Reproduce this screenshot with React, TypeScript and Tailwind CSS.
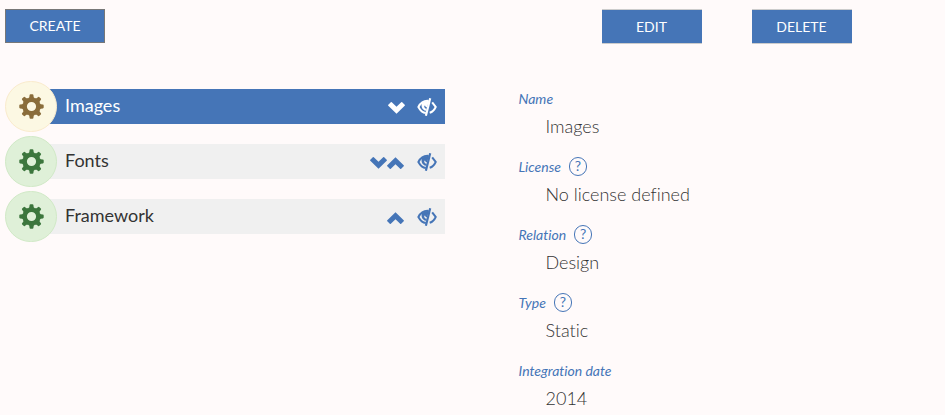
import React from "react";

type Item = { name: string; selected?: boolean; down?: boolean; up?: boolean };

const items: Item[] = [
  { name: "Images", selected: true, down: true },
  { name: "Fonts", down: true, up: true },
  { name: "Framework", up: true },
];

const details = [
  { label: "Name", value: "Images", help: false },
  { label: "License", value: "No license defined", help: true },
  { label: "Relation", value: "Design", help: true },
  { label: "Type", value: "Static", help: true },
  { label: "Integration date", value: "2014", help: false },
];

function Gear() {
  return (
    <svg viewBox="-12.5 -12.5 25 25" className="size-[25px]" fill="currentColor" aria-hidden="true">
      <path
        fillRule="evenodd"
        d="M0-9a9 9 0 1 0 0 18a9 9 0 1 0 0-18zM0-4.6a4.6 4.6 0 1 1 0 9.2a4.6 4.6 0 1 1 0-9.2z"
      />
      {[0, 45, 90, 135, 180, 225, 270, 315].map((angle) => (
        <path
          key={angle}
          transform={`rotate(${angle})`}
          d="M-3.6-8L-2.2-9.3L-1.9-11.4Q-1.8-12.2-1-12.2H1Q1.8-12.2 1.9-11.4L2.2-9.3L3.6-8z"
        />
      ))}
    </svg>
  );
}

function Chevron({ up }: { up?: boolean }) {
  return (
    <svg viewBox="0 0 17 14" className="h-[14px] w-[17px]" fill="currentColor" aria-hidden="true">
      <path
        d={
          up
            ? "M8.5 1.2L16.7 9.2Q17.2 9.7 16.7 10.2L14.2 12.7Q13.7 13.1 13.2 12.7L8.5 8.2L3.8 12.7Q3.3 13.1 2.8 12.7L0.3 10.2Q-0.2 9.7 0.3 9.2z"
            : "M8.5 12.8L16.7 4.8Q17.2 4.3 16.7 3.8L14.2 1.3Q13.7 0.9 13.2 1.3L8.5 5.8L3.8 1.3Q3.3 0.9 2.8 1.3L0.3 3.8Q-0.2 4.3 0.3 4.8z"
        }
      />
    </svg>
  );
}

function EyeOff() {
  return (
    <svg viewBox="0 0 20 18" className="h-[18px] w-5" fill="none" stroke="currentColor" aria-hidden="true">
      <path d="M11.5 2.9C7 2.5 3.6 4.8 1.4 9C3.2 12.4 5.5 14.7 8.8 15.1" strokeWidth="2" />
      <path
        d="M12 2.5L5.2 4.4C3.7 7.6 4.7 11.8 9.1 12.8L9.7 11C8 10.6 7.2 9.6 7.2 7.8L8.2 7.8Q8.4 9.3 10 9.3L11.4 5z"
        fill="currentColor"
        stroke="none"
      />
      <path d="M13.2 0.3L8.9 17.7" strokeWidth="2.2" />
      <path d="M15.2 4.4L18.7 9C17.4 11.8 15.3 14 12.7 14.8" strokeWidth="2" />
    </svg>
  );
}

export default function App() {
  return (
    <main className="grid min-h-screen grid-cols-2 bg-[#fffafa] font-['Lato',sans-serif] text-[#333] [font-variant-ligatures:none]">
      <section className="pt-[9px] pr-7 pl-[5px]">
        <button type="button" className="block h-[34px] w-[100px] border border-[#777] bg-[#4575b7] text-sm text-white">
          CREATE
        </button>
        <ul className="mt-[38px] flex flex-col gap-1">
          {items.map((item) => (
            <li key={item.name} className="flex items-center">
              <span
                className={`z-10 flex h-[51px] w-[52px] shrink-0 items-center justify-center rounded-full border ${
                  item.selected
                    ? "border-[#faebcc] bg-[#fcf8e3] text-[#8a6d3b]"
                    : "border-[#d0e9c6] bg-[#dff0d8] text-[#3c763d]"
                }`}
              >
                <Gear />
              </span>
              <div
                className={`-ml-4 flex h-[35px] flex-1 items-center pr-2 pl-6 ${
                  item.selected ? "bg-[#4575b7] text-white" : "bg-[#f0f0f0] text-[#4575b7]"
                }`}
              >
                <span className={`flex-1 self-start text-lg leading-8 ${item.selected ? "text-white" : "text-[#333]"}`}>
                  {item.name}
                </span>
                <span className="flex pt-0.5">
                  {item.down && (
                    <button type="button" aria-label={`Move ${item.name} down`}>
                      <Chevron />
                    </button>
                  )}
                  {item.up && (
                    <button type="button" className="mr-px" aria-label={`Move ${item.name} up`}>
                      <Chevron up />
                    </button>
                  )}
                </span>
                <button type="button" className="ml-3" aria-label={`Hide ${item.name}`}>
                  <EyeOff />
                </button>
              </div>
            </li>
          ))}
        </ul>
      </section>

      <section className="pt-[9px] pl-[45px]">
        <div className="flex gap-[50px] pl-[84px]">
          {["EDIT", "DELETE"].map((label) => (
            <button
              key={label}
              type="button"
              className="h-[35px] w-[100px] border-y border-[#ccc] bg-[#4575b7] text-sm text-white"
            >
              {label}
            </button>
          ))}
        </div>
        <dl className="mt-10 flex flex-col gap-3 pl-px">
          {details.map((detail) => (
            <div key={detail.label}>
              <dt className="flex h-7 items-center gap-2 text-sm text-[#4575b7] italic">
                <span className="pt-0.5">{detail.label}</span>
                {detail.help && (
                  <button
                    type="button"
                    aria-label={`Help about ${detail.label}`}
                    className="flex h-[19px] w-[18px] items-center justify-center rounded-full border border-[#4575b7] text-sm not-italic"
                  >
                    ?
                  </button>
                )}
              </dt>
              <dd className="pl-[27px] text-lg leading-7 font-light">{detail.value}</dd>
            </div>
          ))}
        </dl>
      </section>
    </main>
  );
}
